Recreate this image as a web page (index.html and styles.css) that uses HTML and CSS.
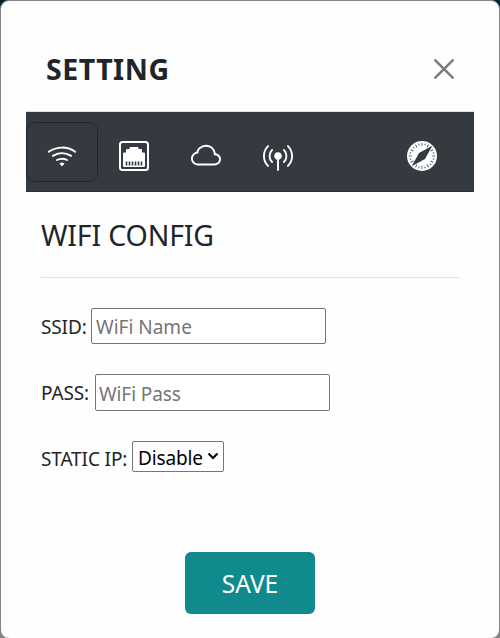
FILE: index.html
```html
<!DOCTYPE html>
<html lang="en">
<head>
<meta charset="utf-8">
<title>Setting</title>
<link rel="stylesheet" href="styles.css">
</head>
<body>
<main class="modal">
  <header class="modal-header">
    <h1 class="modal-title">SETTING</h1>
    <button class="close" aria-label="Close"><svg viewBox="0 0 20 20"><path d="M1.3 1.3 18.7 18.7M18.7 1.3 1.3 18.7"/></svg></button>
  </header>
  <nav class="tabs">
    <button class="tab active" aria-label="WiFi"><svg viewBox="0 0 16 16"><path d="M15.384 6.115a.485.485 0 0 0-.047-.736A12.444 12.444 0 0 0 8 3C5.259 3 2.723 3.882.663 5.379a.485.485 0 0 0-.048.736.518.518 0 0 0 .668.05A11.448 11.448 0 0 1 8 4c2.507 0 4.827.802 6.716 2.164.205.148.49.13.668-.049z"/><path d="M13.229 8.271a.482.482 0 0 0-.063-.745A9.455 9.455 0 0 0 8 6c-1.905 0-3.68.56-5.166 1.526a.48.48 0 0 0-.063.745.525.525 0 0 0 .652.065A8.46 8.46 0 0 1 8 7a8.46 8.46 0 0 1 4.576 1.336c.206.132.48.108.653-.065zm-2.183 2.183c.226-.226.185-.605-.1-.75A6.473 6.473 0 0 0 8 9c-1.06 0-2.062.254-2.946.704-.285.145-.326.524-.1.75l.015.015c.16.16.407.19.611.09A5.478 5.478 0 0 1 8 10c.868 0 1.69.201 2.42.56.203.1.45.07.611-.091l.015-.015zM9.06 12.44c.196-.196.198-.52-.04-.66A1.99 1.99 0 0 0 8 11.5a1.99 1.99 0 0 0-1.02.28c-.238.14-.236.464-.04.66l.706.706a.5.5 0 0 0 .708 0l.707-.707z"/></svg></button>
    <button class="tab" aria-label="Ethernet"><svg viewBox="0 0 30 30"><rect class="outline" x="1" y="1" width="28" height="28" rx="2.5"/><path d="M4 25V12.5q0-1 1-1h2V9q0-1 1-1h2.5V7q0-1 1-1h7q1 0 1 1v1H22q1 0 1 1v2.5h2q1 0 1 1V25q0 1-1 1H5q-1 0-1-1z"/><path class="pins" d="M7.5 20.500v4M10.500 20.500v4M13.500 20.500v4M16.500 20.500v4M19.500 20.500v4M22.500 20.500v4"/></svg></button>
    <button class="tab" aria-label="Cloud"><svg viewBox="0 0 16 16"><path d="M4.406 3.342A5.53 5.53 0 0 1 8 2c2.69 0 4.923 2 5.166 4.579C14.758 6.804 16 8.137 16 9.773 16 11.569 14.502 13 12.687 13H3.781C1.708 13 0 11.366 0 9.318c0-1.763 1.266-3.223 2.942-3.593.143-.863.698-1.723 1.464-2.383zm.653.757c-.757.653-1.153 1.440-1.153 2.056v.448l-.445.049C2.064 6.805 1 7.952 1 9.318 1 10.785 2.230 12 3.781 12h8.906C13.980 12 15 10.988 15 9.773c0-1.216-1.020-2.228-2.313-2.228h-.5v-.5C12.188 4.825 10.328 3 8 3a4.530 4.530 0 0 0-2.941 1.100z"/></svg></button>
    <button class="tab" aria-label="Broadcast"><svg viewBox="0 0 16 16"><path d="M3.050 3.050a7 7 0 0 0 0 9.900.5.5 0 0 1-.707.707 8 8 0 0 1 0-11.314.5.5 0 0 1 .707.707m2.122 2.122a4 4 0 0 0 0 5.656.5.5 0 1 1-.708.708 5 5 0 0 1 0-7.072.5.5 0 0 1 .708.708m5.656-.708a.5.5 0 0 1 .708 0 5 5 0 0 1 0 7.072.5.5 0 1 1-.708-.708 4 4 0 0 0 0-5.656.5.5 0 0 1 0-.708m2.122-2.120a.5.5 0 0 1 .707 0 8 8 0 0 1 0 11.313.5.5 0 0 1-.707-.707 7 7 0 0 0 0-9.900.5.5 0 0 1 0-.707zM6 8a2 2 0 1 1 2.500 1.937V15.500a.5.5 0 0 1-1 0V9.937A2 2 0 0 1 6 8z"/></svg></button>
    <button class="tab last" aria-label="Explore"><svg viewBox="0 0 32 32"><circle cx="16" cy="16" r="16"/><circle class="ticks-short" cx="16" cy="16" r="12.700" pathLength="240"/><circle class="ticks" cx="16" cy="16" r="12.200" pathLength="240"/><path class="needle" d="M27 5 19.200 19.200 5 27 12.800 12.800z"/></svg></button>
  </nav>
  <section class="panel">
    <h2 class="panel-title">WIFI CONFIG</h2>
    <label class="field"><span class="label ssid">SSID:</span><input placeholder="WiFi Name"></label>
    <label class="field"><span class="label pass">PASS:</span><input class="pass-input" placeholder="WiFi Pass"></label>
    <label class="field"><span class="label static">STATIC IP:</span><span class="select"><span>Disable</span><svg viewBox="0 0 12 8"><path d="M1.500 1.500 6 6l4.500-4.500"/></svg></span></label>
  </section>
  <button class="save">SAVE</button>
</main>
</body>
</html>
```
FILE: styles.css
```css
* { box-sizing: border-box; }
body {
  margin: 0;
  height: 638px;
  overflow: hidden;
  background: linear-gradient(#08242d 50%, #858585 50%);
  color: #212529;
  font-family: "Noto Sans", sans-serif;
}
button { font: inherit; padding: 0; border: 0; background: none; }
h1, h2 { margin: 0; }
.modal {
  width: 500px;
  height: 639px;
  border: 1px solid #858585;
  border-radius: 9px;
  background: #fefefe;
  padding: 0 25px;
  display: flex;
  flex-direction: column;
}
.modal-header {
  height: 111px;
  flex: none;
  padding: 25px 20px 0;
  border-bottom: 1px solid #dee2e6;
  display: flex;
  align-items: center;
  justify-content: space-between;
}
.modal-title { font-size: 28.5px; line-height: 40px; font-weight: 700; letter-spacing: 0.5px; }
.close { width: 20px; height: 20px; display: flex; }
.close svg { width: 20px; height: 20px; fill: none; stroke: #7c7c7c; stroke-width: 2.5; stroke-linecap: round; }
.tabs { height: 80px; flex: none; background: #343a40; border-bottom: 1px solid #2a2e33; display: flex; align-items: center; }
.tab { width: 72px; height: 60px; border-radius: 9px; display: flex; align-items: center; justify-content: center; }
.tab.active { border: 1px solid #212529; }
.tab.last { margin-left: 72px; }
.tab svg { width: 30px; height: 30px; margin-top: 8px; fill: #fff; }
.tab .outline { fill: none; stroke: #fff; stroke-width: 2; }
.tab .pins { stroke: #343a40; stroke-width: 1.6; }
.tab .ticks, .tab .ticks-short { fill: none; stroke: #343a40; }
.tab .ticks { stroke-width: 3.4; stroke-dasharray: 2.6 17.4; stroke-dashoffset: 1.3; }
.tab .ticks-short { stroke-width: 1.8; stroke-dasharray: 2.6 17.4; stroke-dashoffset: 11.3; }
.tab .needle { fill: #343a40; }
.panel { padding: 0 15px; }
.panel-title { height: 86px; margin-bottom: 30px; border-bottom: 1px solid #dee2e6; font-size: 28.5px; font-weight: 400; line-height: 40px; padding-top: 23px; letter-spacing: -0.15px; }
.field { height: 37px; margin-bottom: 29px; display: flex; align-items: center; font-size: 19px; }
.label { white-space: nowrap; letter-spacing: -0.12px; }
.ssid { width: 50px; }
.pass { width: 54px; }
.static { width: 91px; }
input {
  align-self: flex-start;
  width: 235px;
  height: 36px;
  border: 1px solid #767676;
  border-radius: 2px;
  padding: 2px 4px 0;
  background: #fff;
  font: 19px "Noto Sans", sans-serif;
}
.pass-input { height: 37px; padding-left: 3px; letter-spacing: -0.1px; }
input::placeholder { color: #757575; opacity: 1; }
.select {
  align-self: flex-start;
  margin-top: 1px;
  width: 92px;
  height: 31px;
  border: 1px solid #767676;
  border-radius: 2px;
  background: #fff;
  color: #000;
  display: flex;
  align-items: center;
  justify-content: space-between;
  padding: 2px 4px 0 5px;
  letter-spacing: -0.15px;
}
.select svg { width: 12px; height: 8px; margin-top: -4px; fill: none; stroke: #000; stroke-width: 2.2; }
.save {
  width: 130px;
  height: 62px;
  margin: 46px 0 0 159px;
  border-radius: 6px;
  background: #118a8d;
  color: #fff;
  font-size: 24.5px;
  padding-top: 1px;
}
```
